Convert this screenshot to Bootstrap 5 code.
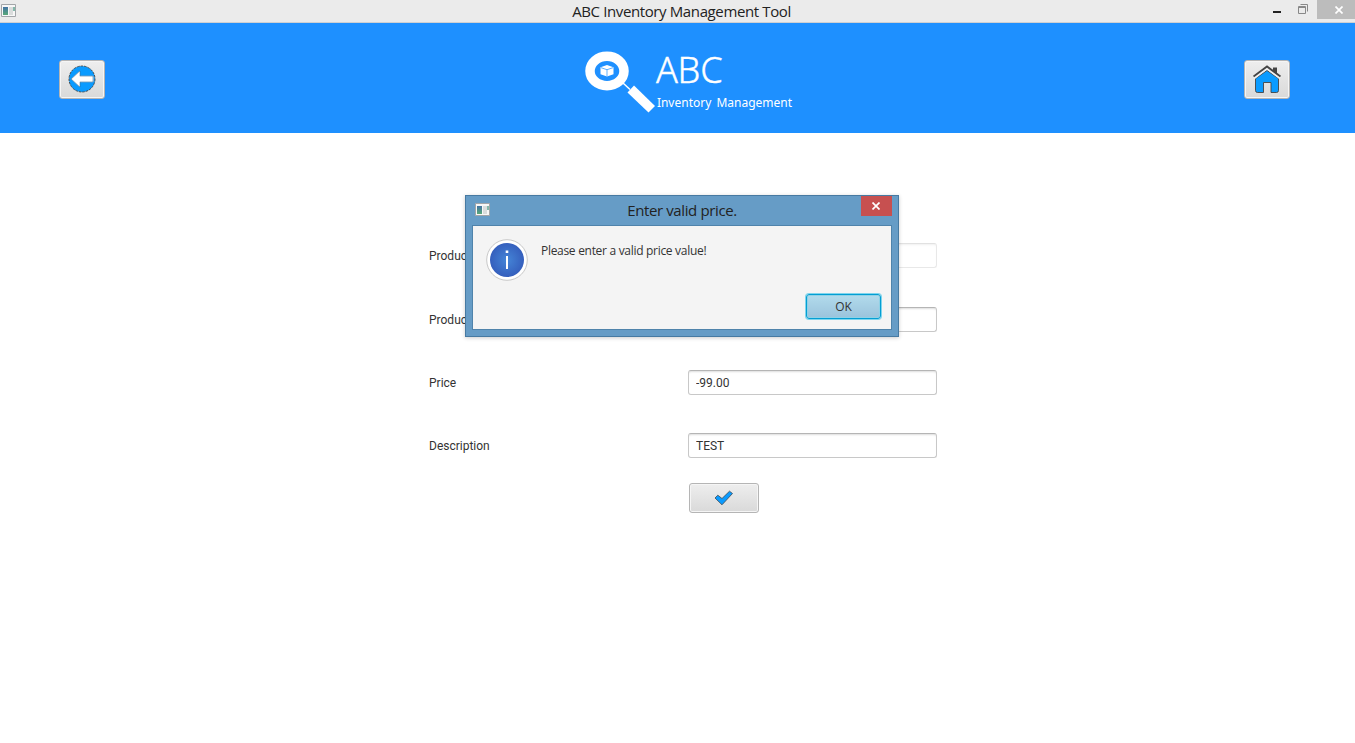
<!DOCTYPE html>
<html lang="en">
<head>
<meta charset="utf-8">
<title>ABC Inventory Management Tool</title>
<link href="https://cdn.jsdelivr.net/npm/bootstrap@5.3.0/dist/css/bootstrap.min.css" rel="stylesheet">
<style>
body{height:743px;overflow:hidden;font-family:Roboto,sans-serif;font-size:12px;color:#333;background:#fff}
svg{display:block;flex:none}
.segoe{font-family:"Open Sans","Noto Sans",sans-serif}
.titlebar{height:23px;background:#ebebeb;border-bottom:1px solid #cfd0d2;padding-left:1px}
.side{width:124px}
.win-title{font-size:15px;line-height:22px;letter-spacing:-.38px;color:#222;padding-left:7px;white-space:nowrap}
.win-close{width:38px;height:19px;background:#bcbcbc;padding-left:7px}
.brandbar{height:110px;background:#1e90ff;padding:0 65px 0 59px}
.fx-btn{--bs-btn-padding-x:0;--bs-btn-padding-y:0;border:1px solid #b5b5b5;border-radius:3px;background:linear-gradient(#eee,#d9d9d9);box-shadow:inset 0 0 0 1px #f5f5f5}
.tool-btn{width:46px;height:39px;margin-top:3px}
.tool-btn svg{margin-top:-2px}
.logo{padding-left:28px;padding-top:6px}
.logo-name{font-family:"Noto Sans",sans-serif;font-size:36px;line-height:34px;font-weight:300;letter-spacing:-.2px;-webkit-text-stroke:.4px #fff}
.logo-text{padding-top:5px}
.logo-sub{font-family:"Noto Sans",sans-serif;font-size:12px;line-height:16px;word-spacing:2px;letter-spacing:0;margin-top:8px;padding-left:1px}
.product-form{width:508px;margin-left:429px;padding-top:110px}
.field-row{height:25px}
.field-row label{width:259px}
.fx-input{width:249px;height:25px;min-height:0;padding:0 7px;font-size:12px;color:#333;border:1px solid #c8c8c8;border-top-color:#b5b5b5;border-radius:3px;box-shadow:inset 0 2px 2px -1px #ddd}
.fx-input:disabled{background:#fff;opacity:.4}
.gap-39{margin-bottom:39px}.gap-38{margin-bottom:38px}
.ok-check{width:70px;height:30px;margin:25px 0 0 260px}
.alert-win{left:465px;top:195px;width:434px;height:142px;background:#669cc6;border:1px solid #477aa2;padding:0 6px 6px;box-shadow:0 1px 4px #0003}
.alert-head{height:29px}
.alert-icon{width:31px;padding:7px 0 0 3px}
.alert-title{font-size:15px;line-height:28px;letter-spacing:-.38px;color:#222}
.alert-close{width:31px;height:20px;background:#c75050}
.alert-area{height:105px;background:#f4f4f4;border:1px solid #4f83ab;padding:13px 10px 10px 13px}
.alert-msg{font-size:12px;line-height:20px;padding:2px 0 0 13px;letter-spacing:-.3px}
.alert-ok{--bs-btn-padding-x:0;--bs-btn-padding-y:0;width:75px;height:25px;font-size:12px;line-height:23px;color:#333;border:1px solid #039ed3;border-radius:3px;background:linear-gradient(#b2dbec,#9ac3dc);box-shadow:0 0 0 1px #7fd5ed,inset 0 0 0 1px #8fd1e6}
</style>
</head>
<body class="d-flex flex-column position-relative">
<svg width="0" height="0" class="position-absolute" aria-hidden="true"><defs>
<linearGradient id="pane" x2="0" y2="1"><stop stop-color="#4373a4"/><stop offset="1" stop-color="#58a878"/></linearGradient>
<symbol id="app" viewBox="0 0 16 14"><path fill="#f7f7f7" stroke="#a2a5a8" d="M.5.5h14v12H.5z"/><path fill="url(#pane)" d="M2 3h5v8H2z"/><path fill="#d9dcdc" d="M8 3h4v8H8z"/><path fill="#83b8aa" d="M12 3h2v4h-2z"/></symbol>
<radialGradient id="info"><stop stop-color="#4585d7"/><stop offset="1" stop-color="#355fbd"/></radialGradient>
</defs></svg>

<header class="titlebar d-flex justify-content-between segoe">
  <div class="side pt-1"><svg width="16" height="14"><use href="#app"/></svg></div>
  <div class="win-title">ABC Inventory Management Tool</div>
  <div class="side d-flex justify-content-end">
    <svg width="48" height="19"><path fill="#222" d="M4 11h8v2H4z"/><path fill="none" stroke="#888" d="M31.500 4.500h7v7"/><path fill="none" stroke="#888" d="M29.500 6.500h7v7h-7zM29 7.500h8"/></svg>
    <div class="win-close d-flex align-items-center justify-content-center"><svg width="8" height="8"><path d="M.5.5l7 7m0-7l-7 7" stroke="#fff" stroke-width="1.700"/></svg></div>
  </div>
</header>

<nav class="brandbar d-flex align-items-center justify-content-between">
  <button class="btn fx-btn tool-btn d-flex align-items-center justify-content-center" aria-label="Back">
    <svg width="28" height="28" viewBox="0 0 28 28"><circle cx="14" cy="14" r="13" fill="#0a9bff" stroke="#444" stroke-width=".9" stroke-dasharray="2.500 1"/><path d="M3.500 14L11.500 6.500V11.300H25v5.400H11.500v4.800z" fill="#fff" stroke="#fff"/><path d="M3 14L12 6v5h13v6H12v5z" fill="none" stroke="#3b6280" stroke-width=".5"/></svg>
  </button>
  <div class="logo d-flex text-white">
    <svg width="71" height="66" viewBox="0 0 71 66"><ellipse cx="22" cy="23" rx="17" ry="14.700" fill="none" stroke="#fff" stroke-width="9.500"/><path d="M22 17l6.500 2.200v7L22 28.500l-6.500-2.300v-7z" fill="#fff"/><path d="M16 19.700l6 2 6-2M22 21.700v6.500" fill="none" stroke="#1e90ff" stroke-width=".7"/><path d="M38 35l7 6.500" stroke="#fff" stroke-width="1.500"/><path d="M49 37.500L70 58l-6.500 6.500-21-20z" fill="#fff"/></svg>
    <div class="logo-text"><div class="logo-name">ABC</div><div class="logo-sub">Inventory Management</div></div>
  </div>
  <button class="btn fx-btn tool-btn d-flex align-items-center justify-content-center" aria-label="Home">
    <svg width="28" height="28" viewBox="0 0 28 28"><path d="M2.500 13.500L14 5.500l11.500 8v12q0 2-2 2h-5.500v-10h-7.500v10H4.500q-2 0-2-2z" fill="#0a9bff" stroke="#444" stroke-width=".9"/><path d="M1 11.500L14 1.500l13 10" fill="none" stroke="#f1f1f1" stroke-width="2.500" transform="translate(0 1.500)"/><path d="M20 2.500h4v6l-4-3z" fill="#444"/><path d="M.5 11.500L14 1.500l13.500 10" fill="none" stroke="#444" stroke-width="1.900"/></svg>
  </button>
</nav>

<main class="flex-grow-1">
  <form class="product-form">
    <div class="field-row gap-39 d-flex align-items-center"><label for="pid">Product ID</label><input id="pid" class="form-control fx-input" disabled></div>
    <div class="field-row gap-38 d-flex align-items-center"><label for="pname">Product Name</label><input id="pname" class="form-control fx-input"></div>
    <div class="field-row gap-38 d-flex align-items-center"><label for="price">Price</label><input id="price" class="form-control fx-input" value="-99.00"></div>
    <div class="field-row d-flex align-items-center"><label for="desc">Description</label><input id="desc" class="form-control fx-input" value="TEST"></div>
    <button type="button" class="btn fx-btn ok-check d-flex align-items-center justify-content-center" aria-label="Save"><svg width="20" height="16" viewBox="0 0 20 16"><path d="M1 8L3.800 5.200l4.200 3.300L15.500 1.200l3 2.300L8 14.800z" fill="#0a9bff" stroke="#3c4a55" stroke-width=".8" stroke-linejoin="round"/></svg></button>
  </form>
</main>

<section class="alert-win position-absolute segoe" role="dialog" aria-label="Enter valid price.">
  <div class="alert-head d-flex justify-content-between">
    <div class="alert-icon"><svg width="16" height="14"><use href="#app"/></svg></div>
    <div class="alert-title">Enter valid price.</div>
    <div class="alert-close d-flex align-items-center justify-content-center"><svg width="8" height="8"><path d="M.5.500l7 7m0-7l-7 7" stroke="#fff" stroke-width="1.700"/></svg></div>
  </div>
  <div class="alert-area d-flex flex-column justify-content-between">
    <div class="d-flex">
      <svg width="42" height="42"><circle cx="21" cy="21" r="20.300" fill="#fff" stroke="#c8c8c8"/><circle cx="21" cy="21" r="17" fill="url(#info)"/><path d="M19.700 11.500h2.600v2.600h-2.600zM20 17h2v13h-2z" fill="#fff"/></svg>
      <div class="alert-msg">Please enter a valid price value!</div>
    </div>
    <button type="button" class="btn alert-ok align-self-end">OK</button>
  </div>
</section>
<script src="https://cdn.jsdelivr.net/npm/bootstrap@5.3.0/dist/js/bootstrap.bundle.min.js"></script>
</body>
</html>
